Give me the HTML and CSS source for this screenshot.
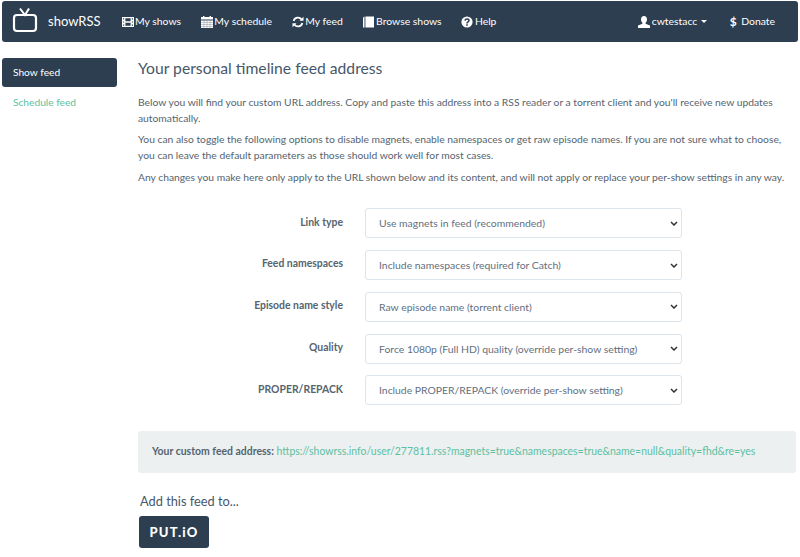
FILE: index.html
```html
<!DOCTYPE html>
<html lang="en">
<head>
    <meta charset="UTF-8">
    <meta name="viewport" content="width=device-width, initial-scale=1.0">
    <title>showRSS</title>
    <link rel="stylesheet" href="styles.css">
</head>
<body>
    <nav class="navbar">
        <a class="brand" href="#">
            <svg class="brand-logo" width="26" height="26" viewBox="0 0 26 26">
                <rect x="2" y="8" width="22" height="16" rx="3" fill="none" stroke="#fff" stroke-width="2.2"/>
                <path d="M8 1.500l5 6.500 4-6.500" fill="none" stroke="#fff" stroke-width="2"/>
            </svg>
            showRSS
        </a>
        <a class="nav-link" href="#">
            <svg class="icon" viewBox="0 0 12 12"><path fill="#fff" fill-rule="evenodd" d="M0 1h12v10H0zM1 2.200v1.200h1.200V2.200zM1 5.400v1.200h1.200V5.400zM1 8.600v1.200h1.200V8.600zM9.800 2.200v1.200H11V2.200zM9.800 5.400v1.200H11V5.400zM9.800 8.600v1.200H11V8.600zM3.400 2.200v3h5.200v-3zM3.400 6.800v3h5.200v-3z"/></svg>
            My shows
        </a>
        <a class="nav-link" href="#">
            <svg class="icon" viewBox="0 0 12 12"><path fill="#fff" d="M0 1h12v2.600H0zM2 0h1.400v1H2zM8.600 0H10v1H8.600zM0 4.400h12V12H0z"/><path stroke="#2c3e50" stroke-width=".5" opacity=".55" d="M0 6.500h12M0 8.500h12M0 10.500h12M3 4.400V12M6 4.400V12M9 4.400V12"/></svg>
            My schedule
        </a>
        <a class="nav-link" href="#">
            <svg class="icon" viewBox="0 0 12 12"><path fill="none" stroke="#fff" stroke-width="1.700" d="M1.600 5A4.500 4.500 0 0 1 9.600 3.400M10.400 7a4.500 4.500 0 0 1-8 1.600"/><path fill="#fff" d="M11.500 .8v4H7.500zM.5 11.200v-4h4z"/></svg>
            My feed
        </a>
        <a class="nav-link" href="#">
            <svg class="icon" viewBox="0 0 12 12"><path fill="#fff" d="M0 1.400 1.500.6v10.800L0 11.600zM2.400 .6H11v10.800H2.400z"/></svg>
            Browse shows
        </a>
        <a class="nav-link" href="#">
            <svg class="icon" viewBox="0 0 12 12"><circle cx="6" cy="6" r="5.600" fill="#fff"/><path fill="none" stroke="#2c3e50" stroke-width="1.500" d="M4 4.600c.2-2.200 4-2.200 4 0 0 1.400-2 1.300-2 2.800"/><path fill="#2c3e50" d="M5.200 8.300h1.600v1.500H5.200z"/></svg>
            Help
        </a>
        <div class="nav-right">
            <a class="nav-link" href="#">
                <svg class="icon" viewBox="0 0 12 12"><path fill="#fff" d="M6 0c1.900 0 3 1.400 3 3.400 0 1.400-.7 2.600-1.400 3.200v1.200L12 9.600V12H0V9.600l4.400-1.800V6.600C3.700 6 3 4.800 3 3.400 3 1.400 4.100 0 6 0z"/></svg>
                cwtestacc <span class="caret"></span>
            </a>
            <a class="nav-link donate" href="#"><b class="dollar">$</b> Donate</a>
        </div>
    </nav>

    <div class="page">
        <aside class="sidebar">
            <a class="side-link active" href="#">Show feed</a>
            <a class="side-link" href="#">Schedule feed</a>
        </aside>

        <main class="content">
            <h1>Your personal timeline feed address</h1>
            <p>Below you will find your custom URL address. Copy and paste this address into a RSS reader or a torrent client and you'll receive new updates automatically.</p>
            <p>You can also toggle the following options to disable magnets, enable namespaces or get raw episode names. If you are not sure what to choose, you can leave the default parameters as those should work well for most cases.</p>
            <p>Any changes you make here only apply to the URL shown below and its content, and will not apply or replace your per-show settings in any way.</p>

            <form class="feed-form">
                <div class="form-row">
                    <label>Link type</label>
                    <select><option>Use magnets in feed (recommended)</option></select>
                </div>
                <div class="form-row">
                    <label>Feed namespaces</label>
                    <select><option>Include namespaces (required for Catch)</option></select>
                </div>
                <div class="form-row">
                    <label>Episode name style</label>
                    <select><option>Raw episode name (torrent client)</option></select>
                </div>
                <div class="form-row">
                    <label>Quality</label>
                    <select><option>Force 1080p (Full HD) quality (override per-show setting)</option></select>
                </div>
                <div class="form-row">
                    <label>PROPER/REPACK</label>
                    <select><option>Include PROPER/REPACK (override per-show setting)</option></select>
                </div>
            </form>

            <div class="feed-box">
                <b>Your custom feed address:</b>
                <a href="#">https://showrss.info/user/277811.rss?magnets=true&amp;namespaces=true&amp;name=null&amp;quality=fhd&amp;re=yes</a>
            </div>

            <h2>Add this feed to...</h2>
            <a class="putio" href="#">PUT.iO</a>
        </main>
    </div>
</body>
</html>
```

FILE: styles.css
```css
* {
    box-sizing: border-box;
}
body {
    margin: 0;
    padding: 1px 2px 0;
    height: 557px;
    overflow: hidden;
    background: #fff;
    font-family: Lato, sans-serif;
    font-size: 10.3px;
    line-height: 15.5px;
    color: #56646f;
}
a {
    text-decoration: none;
}
.navbar {
    display: flex;
    align-items: center;
    height: 41px;
    padding: 0 9px 0 10px;
    background: #2c3e50;
    border-radius: 3px;
}
.brand {
    display: flex;
    align-items: center;
    gap: 10px;
    margin-right: 21px;
    color: #fff;
    font-size: 13px;
}
.brand-logo {
    margin-top: -3px;
}
.nav-link {
    display: flex;
    align-items: center;
    gap: 1.5px;
    margin-right: 19.8px;
    color: #fff;
    font-size: 10.4px;
}
.icon {
    width: 12px;
    height: 12px;
}
.nav-right {
    display: flex;
    align-items: center;
    margin-left: auto;
}
.nav-right .nav-link {
    margin-right: 12px;
    margin-left: 11px;
}
.nav-right .donate {
    margin-right: 14px;
}
.dollar {
    font-size: 12px;
    margin-right: 3px;
}
.caret {
    width: 0;
    height: 0;
    margin-left: 2px;
    border-top: 3px solid #fff;
    border-left: 3px solid transparent;
    border-right: 3px solid transparent;
}
.page {
    display: flex;
    gap: 21px;
    padding-top: 16px;
}
.sidebar {
    width: 115px;
    flex: none;
}
.side-link {
    display: block;
    height: 29px;
    padding: 7px 11px;
    margin-bottom: 1px;
    color: #5dbfa0;
    font-size: 10.2px;
    border-radius: 3px;
}
.side-link.active {
    background: #2c3e50;
    color: #fff;
}
.content {
    flex: 1;
    min-width: 0;
    padding-right: 2px;
}
h1 {
    margin: 0 0 17px;
    font-size: 15.7px;
    line-height: 20px;
    font-weight: 400;
    color: #47576a;
}
p {
    margin: 0 0 6.4px;
}
.feed-form {
    margin-top: 23px;
}
.form-row {
    display: flex;
    align-items: center;
    height: 30px;
    margin-bottom: 11.75px;
}
.form-row label {
    width: 227px;
    padding-right: 22px;
    text-align: right;
    font-weight: 700;
    font-size: 10.4px;
    margin-top: -2px;
}
.form-row select {
    width: 317px;
    height: 30px;
    padding: 0 13px;
    appearance: none;
    background: #fff url("data:image/svg+xml,%3Csvg xmlns='http://www.w3.org/2000/svg' width='8' height='5'%3E%3Cpath d='M1 1l3 3 3-3' fill='none' stroke='%23333' stroke-width='1.500'/%3E%3C/svg%3E") no-repeat right 3px center;
    border: 1px solid #dce4ec;
    border-radius: 3px;
    font-family: Lato, sans-serif;
    font-size: 10.4px;
    color: #5f6f7f;
}
.feed-box {
    height: 42px;
    margin-top: 26px;
    padding: 13px 14px;
    background: #ecf0f1;
    border-radius: 3px;
    font-size: 10.45px;
}
.feed-box a {
    color: #5dbfa0;
}
h2 {
    margin: 19px 0 6px 2px;
    font-size: 12.8px;
    line-height: 18px;
    font-weight: 400;
    color: #47576a;
}
.putio {
    display: block;
    width: 70px;
    height: 32px;
    margin-left: 1px;
    background: #2c3e50;
    border-radius: 3px;
    color: #fff;
    font-size: 13px;
    font-weight: 900;
    line-height: 32px;
    letter-spacing: 1.2px;
    text-align: center;
}
```
